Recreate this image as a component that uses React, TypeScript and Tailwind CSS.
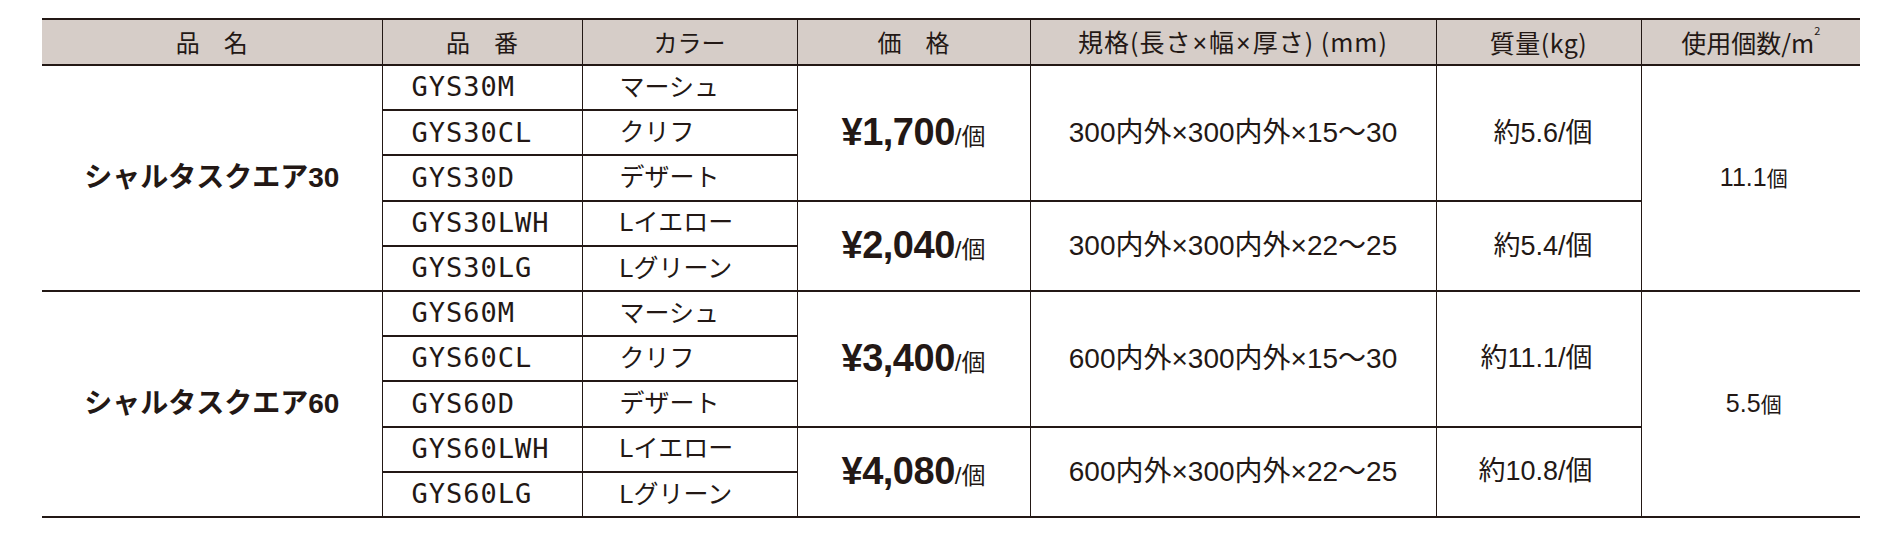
import React from "react";

type Sub = { span: number; price: string; size: string; weight: string };
type Group = { name: string; per: string; rows: { code: string; color: string }[]; subs: Sub[] };

const groups: Group[] = [
  {
    name: "シャルタスクエア30",
    per: "11.1",
    rows: [
      { code: "GYS30M", color: "マーシュ" },
      { code: "GYS30CL", color: "クリフ" },
      { code: "GYS30D", color: "デザート" },
      { code: "GYS30LWH", color: "Lイエロー" },
      { code: "GYS30LG", color: "Lグリーン" },
    ],
    subs: [
      { span: 3, price: "¥1,700", size: "300内外×300内外×15〜30", weight: "約5.6/個" },
      { span: 2, price: "¥2,040", size: "300内外×300内外×22〜25", weight: "約5.4/個" },
    ],
  },
  {
    name: "シャルタスクエア60",
    per: "5.5",
    rows: [
      { code: "GYS60M", color: "マーシュ" },
      { code: "GYS60CL", color: "クリフ" },
      { code: "GYS60D", color: "デザート" },
      { code: "GYS60LWH", color: "Lイエロー" },
      { code: "GYS60LG", color: "Lグリーン" },
    ],
    subs: [
      { span: 3, price: "¥3,400", size: "600内外×300内外×15〜30", weight: "約11.1/個" },
      { span: 2, price: "¥4,080", size: "600内外×300内外×22〜25", weight: "約10.8/個" },
    ],
  },
];

const jp = { fontFamily: '"Liberation Sans", "Noto Sans CJK JP", sans-serif' };
const head = { fontFamily: '"Noto Sans CJK JP", sans-serif' };
const line = "border-[#231815]";

function X() {
  return (
    <span className="mx-[1px]" style={{ fontFamily: '"Liberation Sans", sans-serif' }}>
      ×
    </span>
  );
}

export default function App() {
  return (
    <div className="bg-white w-[1894px] h-[538px] pt-[18px] pl-[42px] text-[#231815]" style={jp}>
      <table className="border-collapse table-fixed w-[1818px]">
        <colgroup>
          <col className="w-[340px]" />
          <col className="w-[200px]" />
          <col className="w-[215px]" />
          <col className="w-[233px]" />
          <col className="w-[406px]" />
          <col className="w-[205px]" />
          <col className="w-[219px]" />
        </colgroup>
        <thead>
          <tr className="h-[46px] bg-[#d6cdc8] text-[24px] leading-none" style={head}>
            <th className={`font-normal border-y-2 ${line}`}>品　名</th>
            <th className={`font-normal border-y-2 border-l ${line}`}>品　番</th>
            <th className={`font-normal border-y-2 border-l ${line}`}>カラー</th>
            <th className={`font-normal border-y-2 border-l ${line}`}>価　格</th>
            <th className={`font-normal border-y-2 border-l ${line} text-[25px] tracking-[1px]`}>
              規格(長さ<X />幅<X />厚さ) (mm)
            </th>
            <th className={`font-normal border-y-2 border-l ${line} text-[25px] tracking-[0.5px]`}>質量(kg)</th>
            <th className={`font-normal border-y-2 border-l ${line} text-[25px]`}>
              使用個数/m<sup className="text-[11px] align-[12px]">2</sup>
            </th>
          </tr>
        </thead>
        <tbody>
          {groups.map((g) =>
            g.rows.map((r, i) => {
              const sub = i === 0 ? g.subs[0] : i === 3 ? g.subs[1] : null;
              return (
                <tr key={r.code} className="h-[45.2px]">
                  {i === 0 && (
                    <td rowSpan={5} className={`border-b-2 ${line} text-center text-[28px] font-bold`}>
                      {g.name}
                    </td>
                  )}
                  <td
                    className={`border-b-2 border-l ${line} pl-[29px] text-[27px] tracking-[1px]`}
                    style={{ fontFamily: '"DejaVu Sans Mono", monospace' }}
                  >
                    {r.code}
                  </td>
                  <td className={`border-b-2 border-l ${line} pl-[37px] text-[25px]`}>{r.color}</td>
                  {sub && (
                    <>
                      <td rowSpan={sub.span} className={`border-b-2 border-l ${line} text-center`}>
                        <span className="text-[38px] font-bold tracking-[-0.5px]">{sub.price}</span>
                        <span className="text-[24px]">/個</span>
                      </td>
                      <td rowSpan={sub.span} className={`border-b-2 border-l ${line} text-center text-[28px]`}>
                        {sub.size}
                      </td>
                      <td rowSpan={sub.span} className={`border-b-2 border-l ${line} text-right pr-[48px] text-[27px]`}>
                        {sub.weight}
                      </td>
                    </>
                  )}
                  {i === 0 && (
                    <td rowSpan={5} className={`border-b-2 border-l ${line} text-center pl-[6px]`}>
                      <span className="text-[25px]">{g.per}</span>
                      <span className="text-[21px]">個</span>
                    </td>
                  )}
                </tr>
              );
            })
          )}
        </tbody>
      </table>
    </div>
  );
}
